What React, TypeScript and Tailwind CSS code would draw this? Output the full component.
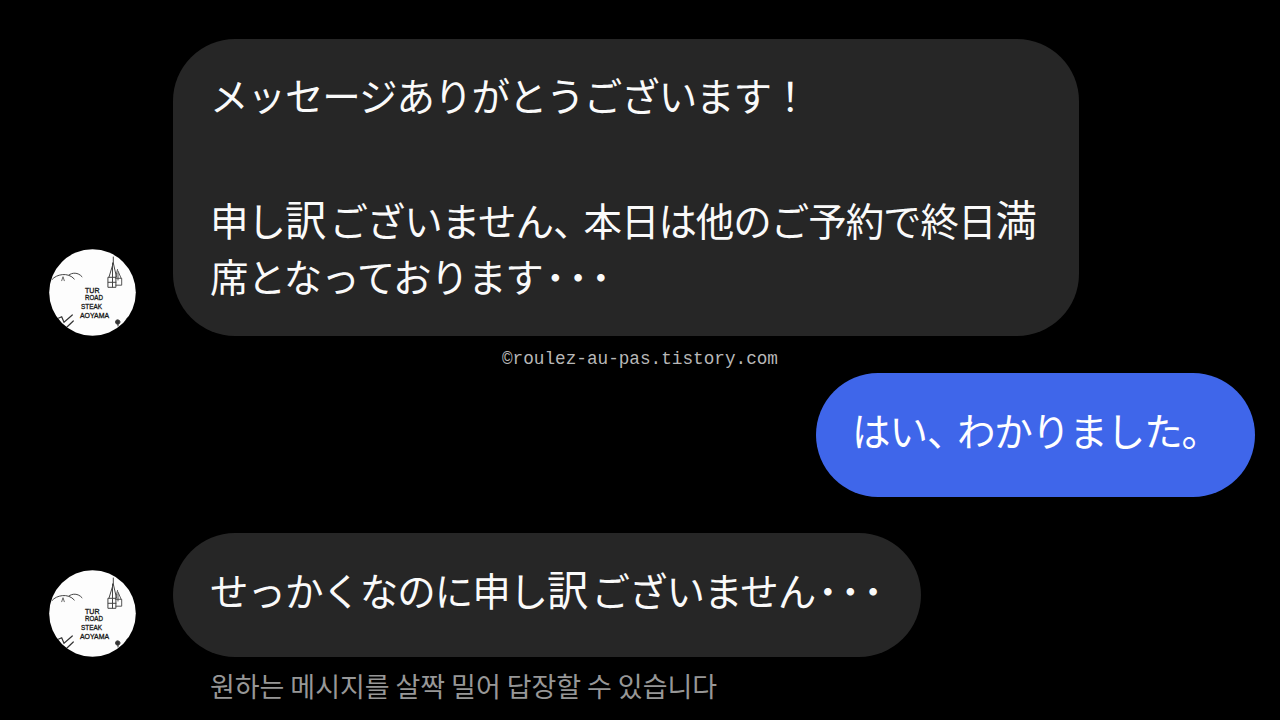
import type { ReactNode } from "react";

const FONT_JP = "font-['Noto_Sans_CJK_JP','Noto_Sans_CJK_KR',sans-serif]";
const FONT_KR = "font-['Noto_Sans_CJK_KR',sans-serif]";

export default function App() {
  return (
    <main className="w-[1280px] h-[720px] bg-black overflow-hidden flex flex-col pt-[39px]">
      <Incoming>
        <Bubble className="w-[906px] h-[297px] bg-[#262626] text-[#fafafa] pt-[27px] pl-[37px]">
          <Line>メッセージありがとうございます！</Line>
          <div className="h-[69px]" />
          <Line>
            申し<Wide>訳</Wide>ございません<span className="tracking-[-8px]">、</span>本日は他のご予約で終日<Wide>満</Wide>
          </Line>
          <Line>
            席となっております<Dots />
          </Line>
        </Bubble>
      </Incoming>

      {/* Watermark */}
      <div className="h-[37px] pt-[10px] text-center font-['Courier_New','Liberation_Mono',monospace] text-[17.7px] leading-[26px] text-[#b8b8b8] whitespace-nowrap">
        ©roulez-au-pas.tistory.com
      </div>

      <div className="flex justify-end pr-[25px]">
        <Bubble className="w-[439px] h-[124px] bg-[#3f66ea] text-white pt-[28px] pl-[36px]">
          <Line>
            はい<span className="tracking-[-8.5px]">、</span>わかりました。
          </Line>
        </Bubble>
      </div>

      <div className="mt-[36px]">
        <Incoming>
          <Bubble className="w-[748px] h-[124px] bg-[#262626] text-[#fafafa] pt-[28px] pl-[37px]">
            <Line>
              せっかくなのに申し<Wide>訳</Wide>ございません<Dots />
            </Line>
          </Bubble>
        </Incoming>
      </div>

      <p className={`mt-[9px] ml-[210px] text-[27px] leading-[40px] tracking-[-0.05px] text-[#979797] whitespace-nowrap ${FONT_KR}`}>
        원하는 메시지를 살짝 밀어 답장할 수 있습니다
      </p>
    </main>
  );
}

function Incoming({ children }: { children: ReactNode }) {
  return (
    <div className="flex items-end pl-[49px] gap-[37px]">
      <Avatar />
      {children}
    </div>
  );
}

function Bubble({ className, children }: { className: string; children: ReactNode }) {
  return <div className={`rounded-[62px] ${className}`}>{children}</div>;
}

function Line({ children }: { children: ReactNode }) {
  return (
    <p className={`h-[56px] leading-[56px] text-[38.5px] tracking-[-1.05px] whitespace-nowrap ${FONT_JP}`}>
      {children}
    </p>
  );
}

// Kanji set a little larger than the kana around them
function Wide({ children }: { children: ReactNode }) {
  return <span className="text-[41.5px] leading-none tracking-[3px]">{children}</span>;
}

function Dots() {
  return <span className="ml-[3px] font-bold tracking-[3.4px]">･･･</span>;
}

function Avatar() {
  return (
    <svg viewBox="0 0 87 87" className="w-[87px] h-[87px] shrink-0">
      <defs>
        <clipPath id="face">
          <circle cx="43.5" cy="43.5" r="43.3" />
        </clipPath>
      </defs>
      <circle cx="43.5" cy="43.5" r="43.3" fill="#fdfdfd" />
      <g clipPath="url(#face)" fill="none" stroke="#444" strokeWidth="1" strokeLinecap="round">
        {/* hills */}
        <path d="M3.3 30.3 C7 25.5 19 22.5 25.3 30 M20 26 C23 23.5 29 23 33 27.7" />
        <path d="M12.7 31.7 L14 27.7 L15.3 31.7" strokeWidth="0.8" />
        {/* tower */}
        <path d="M64.3 8 V14 L60 28 M64.3 14 L67.5 28 M59.3 28.3 H66.9 V38.3 H59.3 Z M63.5 14 V38 M59.3 33.3 H66.9" />
        <path d="M68.5 20.5 L66.5 29 M69 22 L72 29 M66.9 29.3 H72.7 V36.2 H67 M69 24 V31" strokeWidth="0.9" />
        {/* zigzag */}
        <path d="M9.3 69.3 L12.7 67.7 L15 73.3 L23.3 66 M17.7 78.3 L24.3 72" stroke="#333" strokeWidth="1.2" />
        <circle cx="68.7" cy="73" r="2.2" fill="#333" />
        <path d="M69 75 V77 M77.5 70 L79 68" stroke="#333" />
      </g>
      <g fill="#151515" stroke="#151515" strokeWidth="0.3" fontFamily="Liberation Sans, sans-serif" fontSize="7.2" fontWeight="400">
        <text x="36" y="43.5" textLength="14.5" lengthAdjust="spacingAndGlyphs">TUR</text>
        <text x="36" y="51" textLength="18" lengthAdjust="spacingAndGlyphs">ROAD</text>
        <text x="32" y="59.5" textLength="21" lengthAdjust="spacingAndGlyphs">STEAK</text>
        <text x="31" y="68.5" textLength="29" lengthAdjust="spacingAndGlyphs">AOYAMA</text>
      </g>
    </svg>
  );
}
